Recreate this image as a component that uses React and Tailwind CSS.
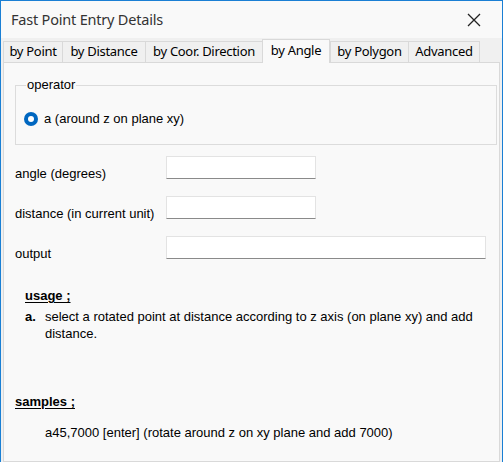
import React from "react";

const tabs = [
  { label: "by Point", w: "w-[59px]" },
  { label: "by Distance", w: "w-[83px]" },
  { label: "by Coor. Direction", w: "w-[117px]" },
  { label: "by Angle", w: "w-[68px]", active: true },
  { label: "by Polygon", w: "w-[78px]" },
  { label: "Advanced", w: "w-[72px]" },
];

const fields = [
  { label: "angle (degrees)", w: "w-[150px]" },
  { label: "distance (in current unit)", w: "w-[150px]" },
  { label: "output", w: "w-[320px]" },
];

const CloseIcon = () => (
  <svg width="14" height="14" viewBox="0 0 14 14" className="block">
    <path d="M1 1 L13 13 M13 1 L1 13" stroke="#222" strokeWidth="1.3" />
  </svg>
);

export default function App() {
  return (
    <div className="w-[503px] h-[462px] overflow-hidden flex flex-col bg-[#f0f0f0] border-x border-t border-[#1a7fd4] text-[#000] font-['Liberation_Sans',Arial,sans-serif]">
      {/* title bar */}
      <div className="h-[37px] shrink-0 flex items-center justify-between bg-[#f9f9f9] pl-[10px] pr-[21px]">
        <span className="text-[14.5px] text-[#333] font-['Noto_Sans',sans-serif] tracking-[-0.2px]">
          Fast Point Entry Details
        </span>
        <CloseIcon />
      </div>

      {/* tab strip */}
      <div className="h-[24px] shrink-0 flex items-end pl-[2px] font-['Noto_Sans',sans-serif] text-[13px] tracking-[-0.3px]">
        {tabs.map((t) =>
          t.active ? (
            <div
              key={t.label}
              className={`${t.w} h-[24px] -mb-px relative z-10 flex items-start justify-center pt-[1px] bg-[#f9f9f9] border-x border-t border-[#d9d9d9]`}
            >
              {t.label}
            </div>
          ) : (
            <div
              key={t.label}
              className={`${t.w} h-[21px] flex items-center justify-center bg-[#f0f0f0] border-l border-t border-[#d9d9d9] last:border-r`}
            >
              {t.label}
            </div>
          )
        )}
      </div>

      {/* tab page */}
      <div className="flex-1 mx-[2px] bg-[#f9f9f9] border border-[#d9d9d9] text-[13px] pl-[11px] pr-[2px]">
        <fieldset className="mt-[14px] border border-[#dcdcdc] pl-[10px] pb-[17px] h-[68px]">
          <legend className="px-[1px] text-[13px] leading-[16px] text-[#000]">operator</legend>
          <label className="flex items-center gap-[6px] mt-[16px] -ml-[2px]">
            <span className="w-[14px] h-[14px] rounded-full bg-[#0067c0] flex items-center justify-center">
              <span className="w-[6px] h-[6px] rounded-full bg-white" />
            </span>
            <span>a (around z on plane xy)</span>
          </label>
        </fieldset>

        <div className="mt-[11px] flex flex-col gap-[17px]">
          {fields.map((f) => (
            <div key={f.label} className="flex items-end">
              <span className="w-[151px] leading-[16px] -mb-[3px]">{f.label}</span>
              <div className={`${f.w} h-[23px] bg-white border border-[#e3e3e3] border-b-[#8a8a8a]`} />
            </div>
          ))}
        </div>

        <div className="mt-[29px] pl-[10px]">
          <div className="font-bold underline underline-offset-2 leading-[16px]">usage ;</div>
          <div className="mt-[4px] flex">
            <span className="w-[20px] font-bold leading-[17px]">a.</span>
            <span className="leading-[17px] w-[440px]">
              select a rotated point at distance according to z axis (on plane xy) and add distance.
            </span>
          </div>
        </div>

        <div className="mt-[52px]">
          <div className="font-bold underline underline-offset-2 leading-[16px]">samples ;</div>
          <div className="mt-[14px] pl-[30px] leading-[17px]">
            a45,7000 [enter] (rotate around z on xy plane and add 7000)
          </div>
        </div>
      </div>
    </div>
  );
}
